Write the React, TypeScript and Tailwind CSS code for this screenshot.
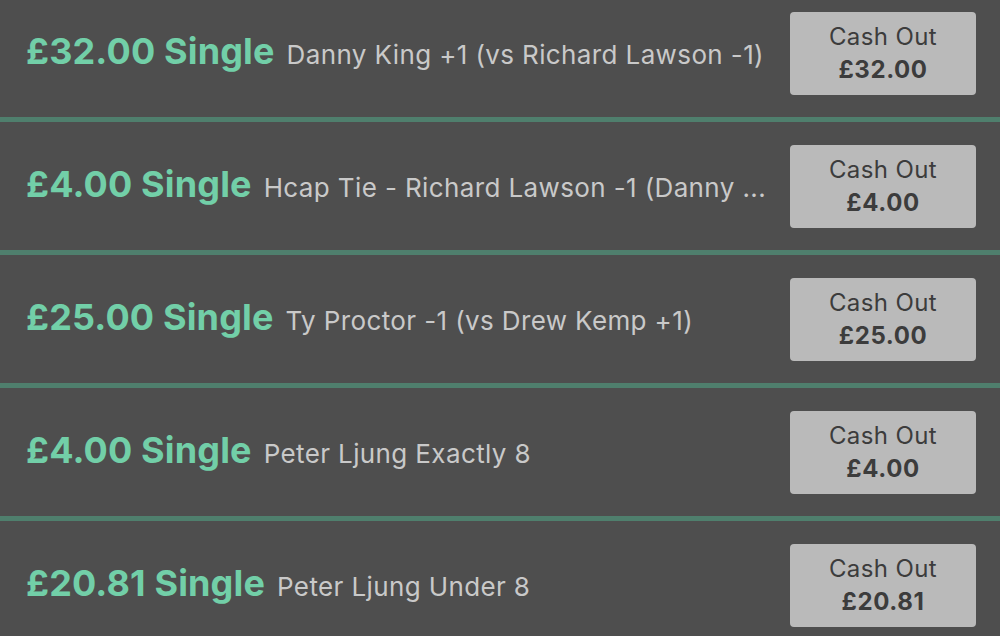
import React from "react";

const rows = [
  { stake: "£32.00", desc: "Danny King +1 (vs Richard Lawson -1)", cash: "£32.00" },
  { stake: "£4.00", desc: "Hcap Tie - Richard Lawson -1 (Danny ...", cash: "£4.00" },
  { stake: "£25.00", desc: "Ty Proctor -1 (vs Drew Kemp +1)", cash: "£25.00" },
  { stake: "£4.00", desc: "Peter Ljung Exactly 8", cash: "£4.00" },
  { stake: "£20.81", desc: "Peter Ljung Under 8", cash: "£20.81" },
];

export default function App() {
  return (
    <div
      className="w-[1000px] h-[636px] overflow-hidden bg-[#4e4e4e]"
      style={{ fontFamily: "Inter, 'Noto Sans', sans-serif" }}
    >
      <div className="-mt-[11px] flex flex-col">
        {rows.map((r, i) => (
          <div
            key={i}
            className="h-[133px] shrink-0 flex items-center pl-[26px] pr-[24px] border-b-[5px] border-[#4f7f6d]"
          >
            <div className="flex-1 min-w-0 flex items-baseline gap-[12px] -mt-[4px]">
              <span className="shrink-0 whitespace-nowrap text-[36px] font-bold text-[#72cfa8] tracking-[0.15px]">
                {r.stake} Single
              </span>
              <span className="whitespace-nowrap text-[26px] text-[#c9c9c9] tracking-[0.38px]">
                {r.desc}
              </span>
            </div>
            <div className="ml-[20px] w-[186px] h-[83px] shrink-0 rounded-[4px] bg-[#bababa] flex flex-col items-center justify-center text-[#3c3c3c] leading-[33px]">
              <span className="text-[24px] tracking-[0.4px]">Cash Out</span>
              <span className="text-[24px] font-bold tracking-[0.6px]">{r.cash}</span>
            </div>
          </div>
        ))}
      </div>
    </div>
  );
}
